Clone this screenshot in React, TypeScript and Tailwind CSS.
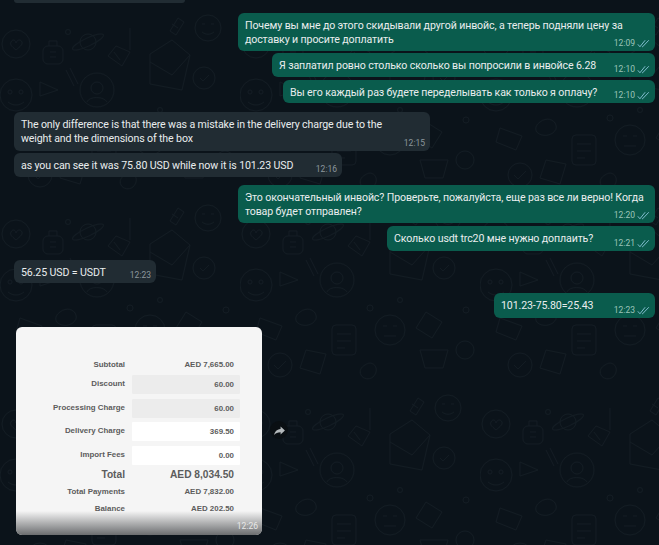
import React from 'react';

// Faint chat wallpaper, only a handful of doodles repeated over the page
const Wallpaper: React.FC = () => (
  <svg className="absolute inset-0 h-full w-full" width="659" height="545" fill="none" stroke="#131c23" strokeWidth="1">
    <defs>
      <pattern id="doodles" width="240" height="190" patternUnits="userSpaceOnUse" patternTransform="translate(0 10)">
        <circle cx="16" cy="34" r="14" />
        <path d="M11 32c2-4 5-1 5 1 0-2 4-5 6-1 1 3-4 6-6 8-2-2-7-5-5-8z" />
        <rect x="43" y="36" width="20" height="18" rx="5" />
        <path d="M49 36v-5h8v5M50 42h6M50 47h6" />
        <circle cx="88" cy="32" r="8" />
        <ellipse cx="88" cy="32" rx="17" ry="4" transform="rotate(-25 88 32)" />
        <path d="M130 18v22M108 46l14 10 8-14-14-6zM114 42l6 8" />
        <path d="M150 52l22 13 18-20-18-15-22 14zM150 52v22l32 6 8-35" />
        <circle cx="97" cy="80" r="17" />
        <circle cx="97" cy="78" r="6" />
        <path d="M87 92c2-6 17-6 20 0" />
        <path d="M40 72l18 8-18 6zM66 60l8 16M70 58l8 16" />
        <circle cx="208" cy="18" r="13" />
        <path d="M202 14h3M211 14h3M202 22c4 3 8 3 12 0" />
        <circle cx="204" cy="68" r="11" />
        <path d="M200 68l3 3 6-6" />
        <path d="M178 8l-8 13 6 4 8-13zM172 14l6 4" />
        <circle cx="16" cy="85" r="16" />
        <circle cx="10" cy="82" r="2" />
        <circle cx="21" cy="82" r="2" />
        <path d="M8 92c5 4 11 4 16 0" />
        <circle cx="130" cy="108" r="3" />
        <path d="M20 118l22 8-6 14-20-8zM60 112c6-5 14-3 16 3s-6 12-14 10-8-9-2-13z" />
        <rect x="92" y="125" width="24" height="30" rx="4" />
        <path d="M97 134h14M97 141h14M97 148h8" />
        <circle cx="150" cy="130" r="15" />
        <path d="M143 126h4M153 126h4M144 136h12" />
        <path d="M186 112l16 10-10 16-16-10zM180 150h28l-5 18h-18z" />
        <circle cx="40" cy="165" r="12" />
        <path d="M34 165l4 4 8-8" />
        <path d="M66 150l20 4-6 20-20-6zM125 165c8-6 16 4 8 12-4 3-10 2-12-2s0-8 4-10z" />
        <circle cx="226" cy="110" r="3" />
        <circle cx="68" cy="22" r="2.5" />
        <circle cx="160" cy="100" r="2.5" />
        <circle cx="225" cy="150" r="9" />
      </pattern>
    </defs>
    <rect width="659" height="545" fill="url(#doodles)" stroke="none" />
  </svg>
);

const Ticks: React.FC = () => (
  <svg width="13" height="9" viewBox="0 0 16 11" fill="none" stroke="#8fc7dc" strokeWidth="1.1" className="ml-[2px]">
    <path d="M1 6.5l2.6 3L10 1.5M6.2 9.2l.6.4L14.5 1.5" />
  </svg>
);

const Bubble: React.FC<{
  text: string;
  time: string;
  className: string;
  own?: boolean;
}> = ({ text, time, className, own = false }) => (
  <div
    className={`relative rounded-[6px] pb-[4px] pl-[7px] pt-[6px] text-[10.6px] leading-[14px] tracking-[-0.12px] text-[#e9edee] ${
      own ? 'self-end bg-[#0a5c4d]' : 'self-start bg-[#212c33]'
    } ${className}`}
  >
    <span>{text}</span>
    <div className={`absolute bottom-[2px] right-[5px] flex items-center text-[8.5px] leading-[11px] tracking-normal ${own ? 'text-[#9cc4ba]' : 'text-[#8c979d]'}`}>
      {time}
      {own && <Ticks />}
    </div>
  </div>
);

const Row: React.FC<{ label: string; value: string; className?: string }> = ({ label, value, className = '' }) => (
  <div className={`grid grid-cols-[109px_108px] gap-x-[7px] items-center font-bold text-[7.9px] text-[#5c5c5c] ${className}`}>
    <span className="text-right">{label}</span>
    <span className="pr-[6px] text-right">{value}</span>
  </div>
);

const Field: React.FC<{ label: string; value: string; editable?: boolean; className?: string }> = ({
  label,
  value,
  editable = false,
  className = '',
}) => (
  <div className={`grid grid-cols-[109px_108px] gap-x-[7px] items-center font-bold text-[7.9px] text-[#5c5c5c] ${className}`}>
    <span className="text-right">{label}</span>
    <span className={`h-[19px] rounded-[1px] pr-[6px] text-right leading-[19px] ${editable ? 'bg-white' : 'bg-[#ececec]'}`}>
      {value}
    </span>
  </div>
);

const InvoiceImage: React.FC = () => (
  <div className="relative ml-[16px] mt-[9px] h-[208px] w-[246px] self-start rounded-[6px] bg-[#f5f5f5] pt-[32px] font-['Liberation_Sans',Arial,sans-serif]">
    <Row label="Subtotal" value="AED 7,665.00" />
    <Field label="Discount" value="60.00" className="mt-[4px]" />
    <Field label="Processing Charge" value="60.00" className="mt-[5px]" />
    <Field label="Delivery Charge" value="369.50" editable className="mt-[4px]" />
    <Field label="Import Fees" value="0.00" editable className="mt-[5px]" />
    <div className="mt-[2px] grid grid-cols-[109px_108px] gap-x-[7px] items-center font-bold text-[10.2px] leading-[16px] text-[#5c5c5c]">
      <span className="text-right">Total</span>
      <span className="pr-[6px] text-right">AED 8,034.50</span>
    </div>
    <Row label="Total Payments" value="AED 7,832.00" className="mt-[3px]" />
    <Row label="Balance" value="AED 202.50" className="mt-[5px]" />
    <div className="absolute inset-x-0 bottom-0 h-[24px] rounded-b-[6px] bg-gradient-to-b from-[#f5f5f5]/0 to-[#6b6d6f]" />
    <span className="absolute bottom-[2px] right-[4px] text-[8.5px] text-[#e8e8e8] font-['Roboto',sans-serif]">12:26</span>
    <div className="absolute left-[254px] top-[94px] flex h-[18px] w-[18px] items-center justify-center rounded-full bg-[#0a0f13]">
      <svg width="13" height="13" viewBox="0 0 24 24" fill="#b4b9bc">
        <path d="M14 9V4.5l8 7.500-8 7.500V15c-5.500 0-9 1.600-12 5.500C3 14.500 6.500 10 14 9z" />
      </svg>
    </div>
  </div>
);

export default function App() {
  return (
    <div className="relative h-[545px] w-[659px] overflow-hidden bg-[#0b131a] font-['Roboto',sans-serif]">
      <Wallpaper />
      <div className="relative flex flex-col pr-[4px]">
        {/* end of the previous message, cut off by the top of the window */}
        <div className="ml-[14px] h-[3px] w-[171px] rounded-b-[6px] bg-[#212c33]" />
        <Bubble
          own
          className="mt-[10px] h-[38px] w-[417px]"
          text="Почему вы мне до этого скидывали другой инвойс, а теперь подняли цену за доставку и просите доплатить"
          time="12:09"
        />
        <Bubble own className="mt-[2px] h-[24px] w-[383px]" text="Я заплатил ровно столько сколько вы попросили в инвойсе 6.28" time="12:10" />
        <Bubble own className="mt-[3px] h-[23px] w-[372px]" text="Вы его каждый раз будете переделывать как только я оплачу?" time="12:10" />
        <Bubble
          className="ml-[14px] mt-[9px] h-[39px] w-[416px] pr-[28px]"
          text="The only difference is that there was a mistake in the delivery charge due to the weight and the dimensions of the box"
          time="12:15"
        />
        <Bubble className="ml-[14px] mt-[2px] h-[24px] w-[328px]" text="as you can see it was 75.80 USD while now it is 101.23 USD" time="12:16" />
        <Bubble
          own
          className="mt-[8px] h-[38px] w-[417px]"
          text="Это окончательный инвойс? Проверьте, пожалуйста, еще раз все ли верно! Когда товар будет отправлен?"
          time="12:20"
        />
        <Bubble own className="mt-[3px] h-[25px] w-[268px]" text="Сколько usdt trc20 мне нужно доплаить?" time="12:21" />
        <Bubble className="ml-[14px] mt-[9px] h-[23px] w-[142px]" text="56.25 USD = USDT" time="12:23" />
        <Bubble own className="mt-[10px] h-[25px] w-[161px]" text="101.23-75.80=25.43" time="12:23" />
        <InvoiceImage />
      </div>
    </div>
  );
}
